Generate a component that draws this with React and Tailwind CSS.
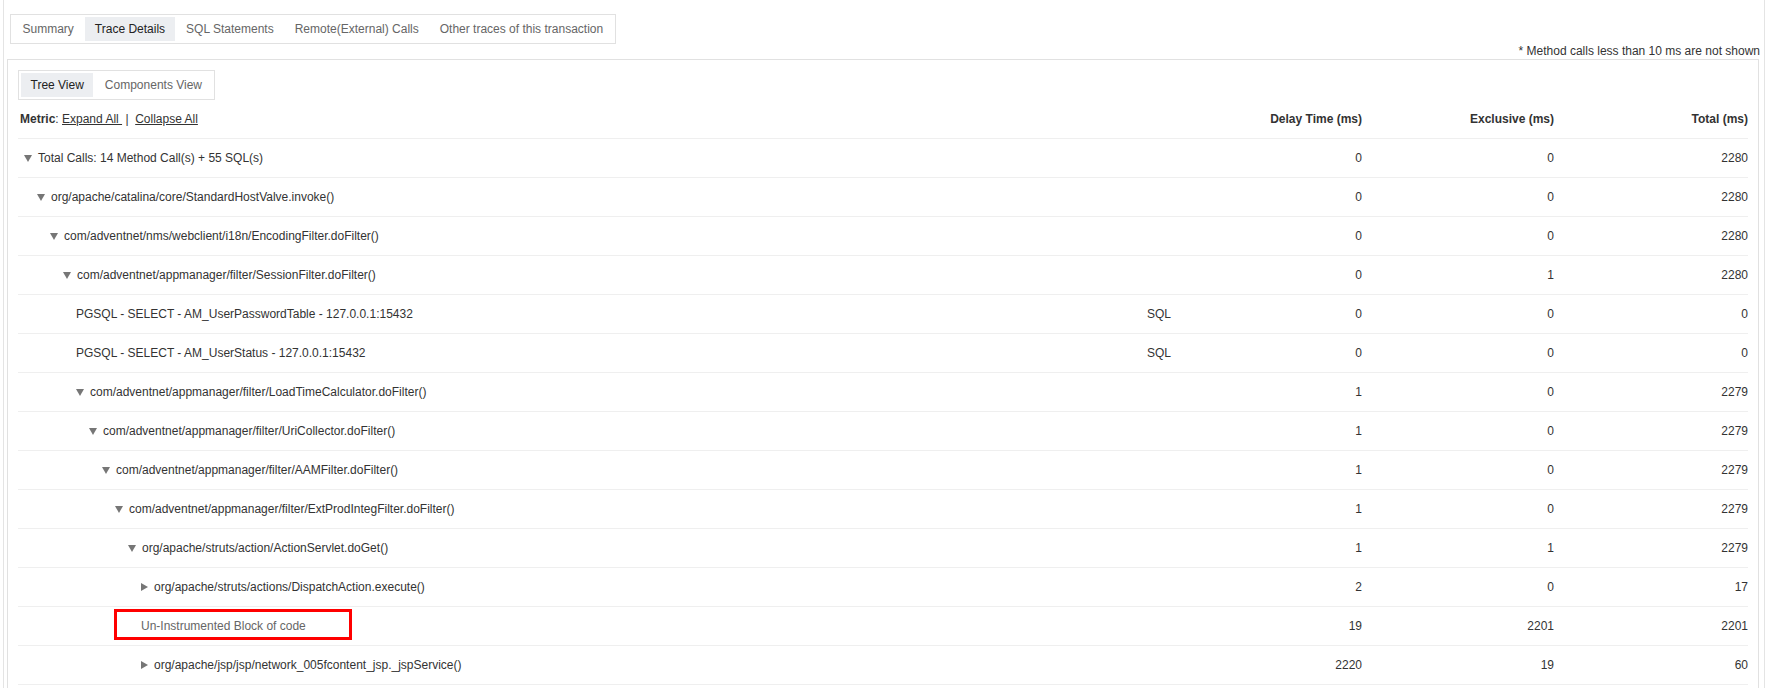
import React from 'react';

const tabs = ['Summary', 'Trace Details', 'SQL Statements', 'Remote(External) Calls', 'Other traces of this transaction'];

const rows = [
  { level: 0, arrow: 'down', name: 'Total Calls: 14 Method Call(s) + 55 SQL(s)', type: '', delay: 0, excl: 0, total: 2280 },
  { level: 1, arrow: 'down', name: 'org/apache/catalina/core/StandardHostValve.invoke()', type: '', delay: 0, excl: 0, total: 2280 },
  { level: 2, arrow: 'down', name: 'com/adventnet/nms/webclient/i18n/EncodingFilter.doFilter()', type: '', delay: 0, excl: 0, total: 2280 },
  { level: 3, arrow: 'down', name: 'com/adventnet/appmanager/filter/SessionFilter.doFilter()', type: '', delay: 0, excl: 1, total: 2280 },
  { level: 4, arrow: null, name: 'PGSQL - SELECT - AM_UserPasswordTable - 127.0.0.1:15432', type: 'SQL', delay: 0, excl: 0, total: 0 },
  { level: 4, arrow: null, name: 'PGSQL - SELECT - AM_UserStatus - 127.0.0.1:15432', type: 'SQL', delay: 0, excl: 0, total: 0 },
  { level: 4, arrow: 'down', name: 'com/adventnet/appmanager/filter/LoadTimeCalculator.doFilter()', type: '', delay: 1, excl: 0, total: 2279 },
  { level: 5, arrow: 'down', name: 'com/adventnet/appmanager/filter/UriCollector.doFilter()', type: '', delay: 1, excl: 0, total: 2279 },
  { level: 6, arrow: 'down', name: 'com/adventnet/appmanager/filter/AAMFilter.doFilter()', type: '', delay: 1, excl: 0, total: 2279 },
  { level: 7, arrow: 'down', name: 'com/adventnet/appmanager/filter/ExtProdIntegFilter.doFilter()', type: '', delay: 1, excl: 0, total: 2279 },
  { level: 8, arrow: 'down', name: 'org/apache/struts/action/ActionServlet.doGet()', type: '', delay: 1, excl: 1, total: 2279 },
  { level: 9, arrow: 'right', name: 'org/apache/struts/actions/DispatchAction.execute()', type: '', delay: 2, excl: 0, total: 17 },
  { level: 9, arrow: null, name: 'Un-Instrumented Block of code', type: '', delay: 19, excl: 2201, total: 2201, marked: true },
  { level: 9, arrow: 'right', name: 'org/apache/jsp/jsp/network_005fcontent_jsp._jspService()', type: '', delay: 2220, excl: 19, total: 60 },
];

const Arrow = ({ dir }) => {
  if (dir === 'down') {
    return (
      <span className="w-[14px] shrink-0 flex items-center">
        <svg width="8" height="7" viewBox="0 0 8 7">
          <polygon points="0,0 8,0 4,7" fill="#767676" />
        </svg>
      </span>
    );
  }
  return (
    <span className="w-[13px] shrink-0 flex items-center">
      <svg width="7" height="8" viewBox="0 0 7 8">
        <polygon points="0,0 7,4 0,8" fill="#767676" />
      </svg>
    </span>
  );
};

const Tabs = ({ items, active }) => (
  <div className="inline-flex border border-[#e1e1e1] p-[2px] gap-[2px] bg-white">
    {items.map((t) => (
      <span
        key={t}
        className={`h-[24px] leading-[24px] px-[9.5px] whitespace-nowrap ${
          t === active ? 'bg-[#eceef1] text-[#222]' : 'text-[#666]'
        }`}
      >
        {t}
      </span>
    ))}
  </div>
);

const App = () => {
  const rowsJsx = rows.map((row, i) => (
    <div
      key={i}
      className="grid grid-cols-[1123px_29px_192px_192px_1fr] h-[39px] border-b border-[#efefef] items-center text-[#333]"
    >
      <div className="relative flex items-center pl-[6px] h-full">
        <div className="flex items-center" style={{ marginLeft: row.level * 13 }}>
          {row.arrow && <Arrow dir={row.arrow} />}
          <span className={`whitespace-nowrap ${row.marked ? 'text-[#666]' : ''}`}>{row.name}</span>
        </div>
        {row.marked && (
          <div className="absolute left-[96px] top-[2px] w-[238px] h-[31px] border-[3px] border-[#f00]"></div>
        )}
      </div>
      <div className="pl-[6px]">{row.type}</div>
      <div className="text-right">{row.delay}</div>
      <div className="text-right">{row.excl}</div>
      <div className="text-right">{row.total}</div>
    </div>
  ));

  return (
    <div className="w-[1772px] h-[692px] bg-white overflow-hidden text-[12px] text-[#333] font-['Liberation_Sans',Arial,sans-serif]">
      <div className="ml-[3px] w-[1762px] h-[688px] border-x border-[#e4e4e4] flex flex-col pt-[14px]">
        <div className="pl-[6px]">
          <Tabs items={tabs} active="Trace Details" />
        </div>
        <div className="h-[15px] leading-[15px] text-right pr-[4px] text-[#333]">
          * Method calls less than 10 ms are not shown
        </div>
        <div className="ml-[3px] mr-[5px] flex-1 border-x border-t border-[#e1e1e1] px-[10px] pt-[10px]">
          <Tabs items={['Tree View', 'Components View']} active="Tree View" />
          <div className="grid grid-cols-[1123px_29px_192px_192px_1fr] h-[39px] border-b border-[#efefef] items-center text-[#333]">
            <div className="pl-[2px] whitespace-nowrap">
              <span className="font-bold">Metric</span>: <span className="underline cursor-pointer">Expand All&nbsp;</span> |&nbsp; <span className="underline cursor-pointer">Collapse All</span>
            </div>
            <div></div>
            <div className="text-right font-bold">Delay Time (ms)</div>
            <div className="text-right font-bold">Exclusive (ms)</div>
            <div className="text-right font-bold">Total (ms)</div>
          </div>
          {rowsJsx}
        </div>
      </div>
    </div>
  );
};

export default App;
